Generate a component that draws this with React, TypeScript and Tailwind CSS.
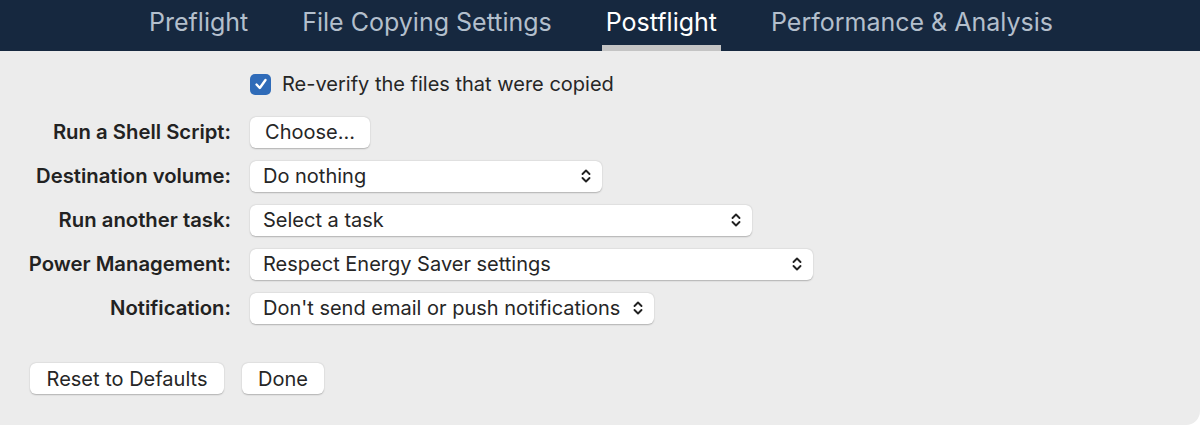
import React from 'react';

const font = { fontFamily: 'Inter, "Noto Sans", sans-serif' };

const tabs = ['Preflight', 'File Copying Settings', 'Postflight', 'Performance & Analysis'];

const Chevrons = () => (
  <svg width="12" height="16" viewBox="0 0 12 16" fill="none" stroke="#222" strokeWidth="1.9" strokeLinecap="round" strokeLinejoin="round">
    <path d="M2.5 6 L6 2.5 L9.5 6" />
    <path d="M2.5 10 L6 13.5 L9.5 10" />
  </svg>
);

const Select = ({ value, width }: { value: string; width: string }) => (
  <div className={`${width} h-[31px] bg-white rounded-[6px] shadow-[0_0.5px_1.5px_rgba(0,0,0,0.25)] flex items-center justify-between pl-[13px] pr-[10px] text-[20px] text-[#262626]`}>
    <span>{value}</span>
    <Chevrons />
  </div>
);

const Button = ({ children, className = '' }: { children: React.ReactNode; className?: string }) => (
  <div className={`h-[31px] bg-white rounded-[6px] shadow-[0_0.5px_1.5px_rgba(0,0,0,0.25)] flex items-center justify-center text-[20px] text-[#262626] ${className}`}>
    {children}
  </div>
);

const Row = ({ label, children }: { label: string; children: React.ReactNode }) => (
  <div className="flex items-center h-[44px]">
    <div className="w-[231px] text-right font-semibold text-[20.3px] text-[#222]">{label}</div>
    <div className="ml-[19px]">{children}</div>
  </div>
);

export default function App() {
  return (
    <div className="w-[1200px] h-[425px] bg-white flex flex-col" style={font}>
      <div className="h-[51px] bg-[#16283f] flex justify-center items-stretch gap-[46px] pl-[2px]">
        {tabs.map((t) => (
          <div key={t} className="relative px-[4px] flex items-center pb-[5px]">
            <span className={`text-[25px] ${t === 'Postflight' ? 'text-white' : 'text-[#b3bfcc]'}`}>{t}</span>
            {t === 'Postflight' && <div className="absolute left-0 right-0 bottom-0 h-[6px] bg-[#c4c4c4]" />}
          </div>
        ))}
      </div>
      <div className="flex-1 bg-[#ececec] rounded-br-[14px] flex flex-col">
        <div className="flex items-center mt-[18px] ml-[250px] gap-[11px]">
          <div className="w-[21px] h-[21px] rounded-[5px] bg-[#2f6bb8] flex items-center justify-center">
            <svg width="14" height="14" viewBox="0 0 14 14" fill="none" stroke="white" strokeWidth="2.4" strokeLinecap="round" strokeLinejoin="round">
              <path d="M2.5 7.5 L5.8 11 L11.5 3" />
            </svg>
          </div>
          <span className="text-[20px] text-[#262626]">Re-verify the files that were copied</span>
        </div>
        <div className="mt-[11px] flex flex-col">
          <Row label="Run a Shell Script:">
            <Button className="w-[120px]">Choose...</Button>
          </Row>
          <Row label="Destination volume:">
            <Select value="Do nothing" width="w-[352px]" />
          </Row>
          <Row label="Run another task:">
            <Select value="Select a task" width="w-[502px]" />
          </Row>
          <Row label="Power Management:">
            <Select value="Respect Energy Saver settings" width="w-[563px]" />
          </Row>
          <Row label="Notification:">
            <Select value="Don't send email or push notifications" width="w-[404px]" />
          </Row>
        </div>
        <div className="flex gap-[18px] ml-[30px] mt-[33px]">
          <Button className="w-[194px]">Reset to Defaults</Button>
          <Button className="w-[82px]">Done</Button>
        </div>
      </div>
    </div>
  );
}
